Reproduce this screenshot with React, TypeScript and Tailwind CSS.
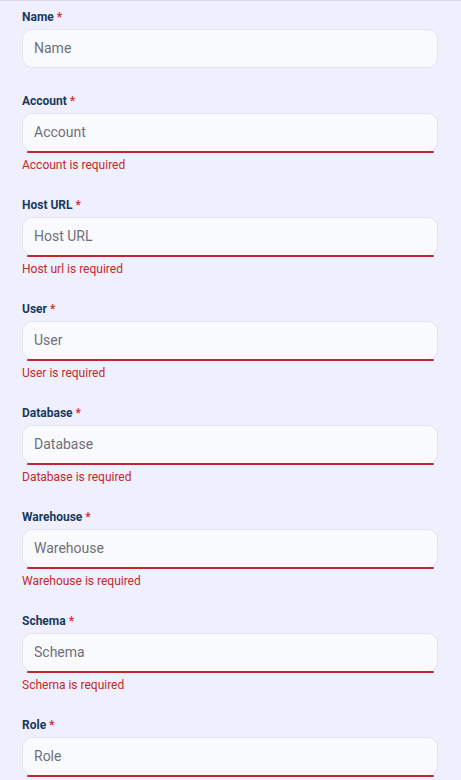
import React from "react";

type Field = { label: string; error?: string; invalid?: boolean };

const fields: Field[] = [
  { label: "Name" },
  { label: "Account", invalid: true, error: "Account is required" },
  { label: "Host URL", invalid: true, error: "Host url is required" },
  { label: "User", invalid: true, error: "User is required" },
  { label: "Database", invalid: true, error: "Database is required" },
  { label: "Warehouse", invalid: true, error: "Warehouse is required" },
  { label: "Schema", invalid: true, error: "Schema is required" },
  { label: "Role", invalid: true },
];

export default function App() {
  return (
    <div
      className="h-[780px] w-[461px] overflow-hidden border-t border-[#d6d9e8] bg-[#f0effd] pl-[22px] pr-[23px] pt-[7px]"
      style={{ fontFamily: "Roboto, 'Liberation Sans', sans-serif" }}
    >
      {fields.map((f) => (
        <div key={f.label} className="mb-6 flex flex-col">
          <label className="h-[17px] pt-px text-[12px] font-bold leading-4 text-[#173b5c]">
            {f.label} <span className="text-[#d32f2f]">*</span>
          </label>
          <div className="relative mt-[4px]">
            <input
              placeholder={f.label}
              className="block h-[39px] w-full rounded-[10px] border border-[#e4e4f0] bg-[#f9fafe] px-[11px] pb-[2px] text-[14px] text-[#333] outline-none placeholder:text-[#6f7077]"
            />
            {f.invalid && (
              <span className="absolute bottom-[-1px] left-[5px] right-[4px] h-[2px] rounded-full bg-[#c0282d]" />
            )}
          </div>
          {f.error && (
            <div className="mt-[5px] h-[15px] text-[12px] leading-4 text-[#c62828]">{f.error}</div>
          )}
        </div>
      ))}
    </div>
  );
}
